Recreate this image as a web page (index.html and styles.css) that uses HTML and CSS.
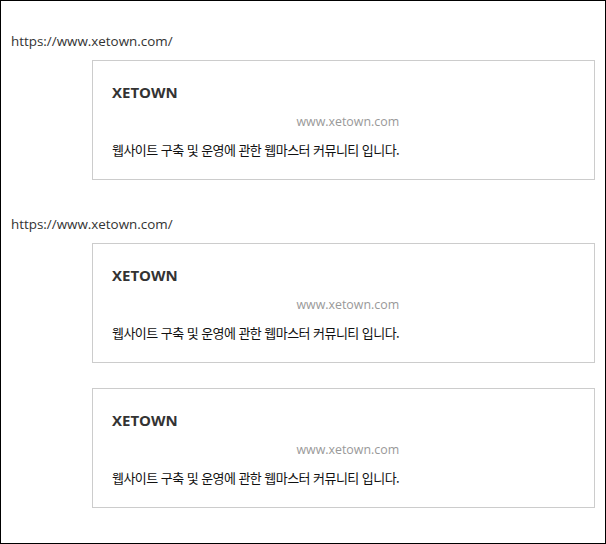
FILE: index.html
```html
<!DOCTYPE html>
<html lang="ko">
<head>
<meta charset="utf-8">
<title>XETOWN</title>
<link rel="stylesheet" href="styles.css">
</head>
<body>
<div class="frame">
  <section class="block">
    <p class="link">https://www.xetown.com/</p>
    <div class="card">
      <div class="card-inner">
        <div class="title">XETOWN</div>
        <div class="site">www.xetown.com</div>
        <div class="desc">웹사이트 구축 및 운영에 관한 웹마스터 커뮤니티 입니다.</div>
      </div>
    </div>
  </section>
  <section class="block">
    <p class="link">https://www.xetown.com/</p>
    <div class="card">
      <div class="card-inner">
        <div class="title">XETOWN</div>
        <div class="site">www.xetown.com</div>
        <div class="desc">웹사이트 구축 및 운영에 관한 웹마스터 커뮤니티 입니다.</div>
      </div>
    </div>
    <div class="card">
      <div class="card-inner">
        <div class="title">XETOWN</div>
        <div class="site">www.xetown.com</div>
        <div class="desc">웹사이트 구축 및 운영에 관한 웹마스터 커뮤니티 입니다.</div>
      </div>
    </div>
  </section>
</div>
</body>
</html>
```
FILE: styles.css
```css
* { box-sizing: border-box; }
html, body { margin: 0; padding: 0; background: #fff; }
body {
  font-family: "Open Sans", "Noto Sans CJK KR", sans-serif;
  color: #222;
}
.frame {
  width: 606px;
  height: 544px;
  border: 1px solid #000;
  padding: 30px 10px 0 10px;
  display: flex;
  flex-direction: column;
  gap: 34px;
}
.block {
  display: flex;
  flex-direction: column;
  gap: 25px;
}
.link {
  margin: 0 0 -16px 0;
  font-size: 13.4px;
  line-height: 20px;
  color: #333;
}
.card {
  margin-left: 81px;
  border: 1px solid #ccc;
  height: 120px;
  padding: 20px 19px 0 19px;
}
.card-inner {
  display: inline-flex;
  flex-direction: column;
}
.title {
  font-size: 15px;
  font-weight: 700;
  line-height: 20px;
  color: #333;
}
.site {
  margin-top: 11px;
  text-align: right;
  font-size: 12.4px;
  line-height: 18px;
  color: #999;
}
.desc {
  margin-top: 10px;
  font-family: "Noto Sans CJK KR", sans-serif;
  font-size: 13px;
  letter-spacing: -0.55px;
  line-height: 18px;
  color: #111;
}
```
